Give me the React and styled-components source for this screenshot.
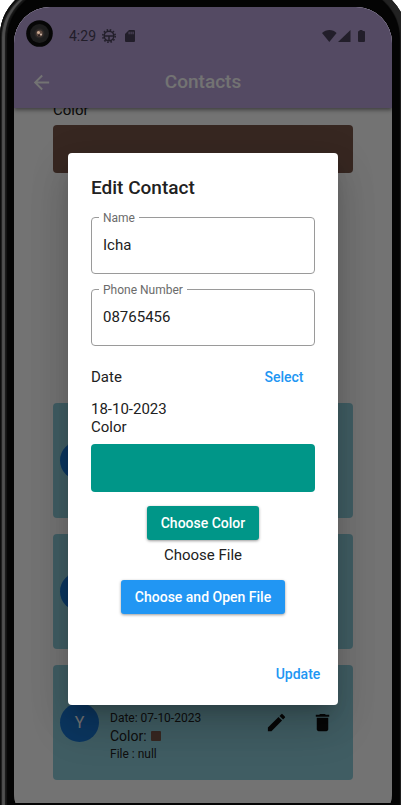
import React from "react";
import styled, { createGlobalStyle } from "styled-components";
import { MdArrowBack, MdDelete, MdEdit } from "react-icons/md";

const GlobalStyle = createGlobalStyle`
  *, *::before, *::after { box-sizing: border-box; }
  body {
    margin: 0;
    background: #fff;
    color: #212121;
    font-family: Roboto, sans-serif;
    font-size: 15px;
    line-height: 18px;
  }
  button, input { font-family: inherit; }
`;

const Page = styled.div`
  display: flex;
  height: 100vh;
  min-height: 720px;
  overflow: hidden;
`;

const Phone = styled.div`
  flex: 1;
  display: flex;
  margin: -14px -6px 0 0;
  padding: 21px 15px 2px 14px;
  border-radius: 50px 50px 0 0;
  background: #040404;
  box-shadow:
    inset 1px 1px 0 #0c0c0c,
    inset 2px 2px 1px #1c1c1c,
    inset 5px 2px 1px #505050,
    inset 7px 3px 1px #161616,
    inset -7px 2px 1px #222;
`;

const Screen = styled.div`
  position: relative;
  flex: 1;
  display: flex;
  flex-direction: column;
  min-width: 0;
  overflow: hidden;
  background: #fafafa;
  border-radius: 36px 36px 2px 2px / 36px 36px 14px 14px;
`;

const TopBar = styled.header`
  position: relative;
  z-index: 1;
  flex: none;
  background: #b7a2d8;
  box-shadow: 0 2px 4px rgba(0, 0, 0, 0.45);
`;

const StatusBar = styled.div`
  display: flex;
  align-items: center;
  justify-content: space-between;
  height: 47px;
  padding: 11px 27px 0 55px;
  color: #4b435c;
  font-size: 14px;
`;

const StatusGroup = styled.div`
  display: flex;
  align-items: center;
  gap: ${(p) => p.$gap}px;
`;

const Toolbar = styled.div`
  display: grid;
  grid-template-columns: 54px 1fr 54px;
  align-items: center;
  height: 54px;
  padding-top: 2px;
`;

const BarTitle = styled.h1`
  margin: 0;
  color: #fafafa;
  font-size: 19px;
  font-weight: 500;
  line-height: 24px;
  text-align: center;
`;

const IconButton = styled.button`
  display: grid;
  place-items: center;
  padding: 0;
  border: 0;
  background: none;
  color: ${(p) => p.$color};
  font-size: 23px;
  cursor: pointer;
`;

const Content = styled.main`
  flex: 1;
  min-height: 0;
  overflow: hidden;
  padding: 0 39px;
`;

const Scrolled = styled.div`
  margin-top: -7px;
`;

const Swatch = styled.div`
  height: 48px;
  margin-top: ${(p) => p.$gap}px;
  border-radius: 4px;
  background: ${(p) => p.$color};
`;

const ContactList = styled.ul`
  display: flex;
  flex-direction: column;
  gap: 16px;
  margin: 230px 0 0;
  padding: 0;
  list-style: none;
`;

const ContactCard = styled.li`
  display: flex;
  align-items: center;
  height: 115px;
  padding: 0 8px 0 7px;
  border-radius: 4px;
  background: #8dcbd8;
`;

const Avatar = styled.div`
  display: grid;
  place-items: center;
  flex: none;
  width: 39px;
  height: 39px;
  border-radius: 50%;
  background: #1976d2;
  color: #fafafa;
  font-size: 16px;
`;

const Details = styled.div`
  flex: 1;
  padding: 27px 0 0 11px;
`;

const Detail = styled.div`
  display: flex;
  align-items: center;
  gap: 4px;
  font-size: ${(p) => (p.$large ? 14 : 12)}px;
  line-height: 18px;
`;

const Dot = styled.span`
  width: 10px;
  height: 10px;
  border-radius: 1px;
  background: #795548;
`;

const CardActions = styled.div`
  display: flex;
  gap: 23px;
  padding-right: 11px;
`;

const Scrim = styled.div`
  position: absolute;
  z-index: 2;
  inset: 0;
  display: grid;
  align-items: center;
  padding: 47px 54px 0;
  background: rgba(0, 0, 0, 0.54);
`;

const Dialog = styled.form`
  display: flex;
  flex-direction: column;
  padding: 23px 23px 14px;
  border-radius: 4px;
  background: #fff;
  box-shadow:
    0 11px 15px -7px rgba(0, 0, 0, 0.2),
    0 24px 38px 3px rgba(0, 0, 0, 0.12),
    0 9px 40px 4px rgba(0, 0, 0, 0.08);
`;

const DialogTitle = styled.h2`
  margin: 0 0 11px;
  font-size: 19px;
  font-weight: 500;
  line-height: 24px;
`;

const Fields = styled.div`
  display: flex;
  flex-direction: column;
  gap: 9px;
`;

const Outline = styled.fieldset`
  min-width: 0;
  height: 63px;
  margin: 0;
  padding: 0;
  border: 1px solid #9a9a9a;
  border-radius: 4px;
`;

const OutlineLabel = styled.legend`
  margin-left: 7px;
  padding: 0 4px;
  color: #6b6b6b;
  font-size: 12px;
  line-height: 14px;
`;

const TextInput = styled.input`
  display: block;
  width: 100%;
  height: 40px;
  padding: 0 11px;
  border: 0;
  outline: 0;
  background: none;
  color: #212121;
  font-size: 15px;
`;

const DateRow = styled.div`
  display: flex;
  align-items: center;
  justify-content: space-between;
  margin: 14px 0 6px;
`;

const TextButton = styled.button`
  min-width: 62px;
  height: 34px;
  padding: 0 8px;
  border: 0;
  background: none;
  color: #2196f3;
  font-size: 14px;
  font-weight: 500;
  cursor: pointer;
`;

const FilledButton = styled.button`
  align-self: center;
  height: 34px;
  padding: 0 14px;
  border: 0;
  border-radius: 3px;
  background: ${(p) => p.$color};
  color: #fff;
  font-size: 14px;
  font-weight: 500;
  cursor: pointer;
  box-shadow: 0 1px 3px rgba(0, 0, 0, 0.4);
`;

const FileSection = styled.div`
  display: flex;
  flex-direction: column;
  align-items: center;
  gap: 6px;
  padding-top: 14px;
`;

const FileLabel = styled.div`
  margin-bottom: 10px;
`;

const DialogActions = styled.div`
  display: flex;
  justify-content: flex-end;
  margin: 43px -14px 0 0;
`;

const Camera = styled.svg`
  position: absolute;
  z-index: 3;
  top: 13px;
  left: 12px;
`;

function Field({ id, label, value }) {
  return (
    <Outline>
      <OutlineLabel>
        <label htmlFor={id}>{label}</label>
      </OutlineLabel>
      <TextInput id={id} defaultValue={value} />
    </Outline>
  );
}

function GearIcon() {
  return (
    <svg width="14" height="14" viewBox="0 0 14 14" fill="none" stroke="currentColor">
      <circle cx="7" cy="7" r="4.8" strokeWidth="1.5" />
      <circle cx="7" cy="7" r="6.2" strokeWidth="1.6" strokeDasharray="1.6 1.646" />
      <path d="M2.5 7h9M7 7v5" strokeWidth="1.5" />
    </svg>
  );
}

function CardIcon() {
  return (
    <svg width="10" height="12" viewBox="0 0 10 12" fill="currentColor">
      <path
        fillRule="evenodd"
        d="M4 0h5a1 1 0 0 1 1 1v10a1 1 0 0 1-1 1H1a1 1 0 0 1-1-1V4zM3.6 1.8v2.4h1V1.8zM5.6 1.8v2.4h1V1.8zM7.6 1.8v2.4h1V1.8z"
      />
    </svg>
  );
}

function SignalIcons() {
  return (
    <svg width="43" height="12" viewBox="0 0 43 12" fill="currentColor">
      <path d="M0 3C4-1 11-1 14.600 3L7.300 12z" />
      <path d="M28.500 0v12H16z" />
      <path d="M37.500 0h3v1h1.500a1 1 0 0 1 1 1v9a1 1 0 0 1-1 1h-5a1 1 0 0 1-1-1V2a1 1 0 0 1 1-1h.5z" />
    </svg>
  );
}

export default function App() {
  return (
    <>
      <GlobalStyle />
      <Page>
        <Phone>
          <Screen>
            <TopBar>
              <StatusBar>
                <StatusGroup $gap={6}>
                  <span>4:29</span>
                  <StatusGroup $gap={9}>
                    <GearIcon />
                    <CardIcon />
                  </StatusGroup>
                </StatusGroup>
                <SignalIcons />
              </StatusBar>
              <Toolbar>
                <IconButton type="button" aria-label="Back" $color="#fafafa">
                  <MdArrowBack />
                </IconButton>
                <BarTitle>Contacts</BarTitle>
              </Toolbar>
            </TopBar>

            <Content>
              <Scrolled>
                <div>Color</div>
                <Swatch $color="#795548" $gap={6} />
                <ContactList>
                  <ContactCard>
                    <Avatar />
                  </ContactCard>
                  <ContactCard>
                    <Avatar />
                  </ContactCard>
                  <ContactCard>
                    <Avatar>Y</Avatar>
                    <Details>
                      <Detail>Date: 07-10-2023</Detail>
                      <Detail $large>
                        Color: <Dot />
                      </Detail>
                      <Detail>File : null</Detail>
                    </Details>
                    <CardActions>
                      <IconButton type="button" aria-label="Edit" $color="#111">
                        <MdEdit />
                      </IconButton>
                      <IconButton type="button" aria-label="Delete" $color="#111">
                        <MdDelete />
                      </IconButton>
                    </CardActions>
                  </ContactCard>
                </ContactList>
              </Scrolled>
            </Content>

            <Scrim>
              <Dialog role="dialog" aria-labelledby="dialog-title">
                <DialogTitle id="dialog-title">Edit Contact</DialogTitle>
                <Fields>
                  <Field id="name" label="Name" value="Icha" />
                  <Field id="phone" label="Phone Number" value="08765456" />
                </Fields>
                <DateRow>
                  <span>Date</span>
                  <TextButton type="button">Select</TextButton>
                </DateRow>
                <div>18-10-2023</div>
                <div>Color</div>
                <Swatch $color="#009688" $gap={8} />
                <FileSection>
                  <FilledButton type="button" $color="#009688">
                    Choose Color
                  </FilledButton>
                  <FileLabel>Choose File</FileLabel>
                  <FilledButton type="button" $color="#2196f3">
                    Choose and Open File
                  </FilledButton>
                </FileSection>
                <DialogActions>
                  <TextButton type="button">Update</TextButton>
                </DialogActions>
              </Dialog>
            </Scrim>

            <Camera width="27" height="27" viewBox="0 0 27 27" aria-hidden="true">
              <circle cx="13.500" cy="13.500" r="13.300" fill="#060606" />
              <circle cx="13.500" cy="13.500" r="9.500" fill="#1d1d1d" />
              <circle cx="13.500" cy="13.500" r="5" fill="#2b2726" />
              <circle cx="13.500" cy="13.500" r="3.200" fill="#5e4a40" />
              <circle cx="12.500" cy="12.500" r="1.500" fill="#c9a890" />
              <circle cx="15" cy="14.500" r="1" fill="#d8c0b0" />
              <circle cx="13" cy="15.500" r="1" fill="#2a2020" />
            </Camera>
          </Screen>
        </Phone>
      </Page>
    </>
  );
}
